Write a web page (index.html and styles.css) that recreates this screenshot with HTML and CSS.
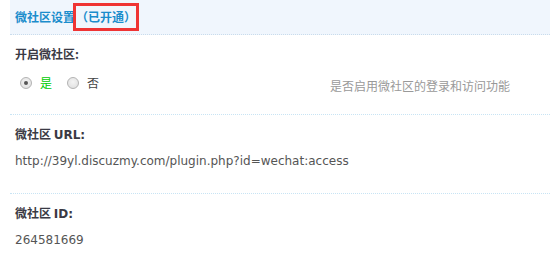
FILE: index.html
```html
<!DOCTYPE html>
<html lang="zh-CN">
<head>
<meta charset="utf-8">
<title>微社区设置</title>
<link rel="stylesheet" href="styles.css">
</head>
<body>
<div class="panel">
  <div class="header">
    <span class="title">微社区设置</span><span class="mark">（已开通）</span>
  </div>
  <div class="section">
    <div class="label">开启微社区:</div>
    <div class="option-row">
      <div class="options">
        <span class="radio checked"></span><span class="opt-yes">是</span>
        <span class="radio"></span><span class="opt-no">否</span>
      </div>
      <div class="tip">是否启用微社区的登录和访问功能</div>
    </div>
  </div>
  <div class="section">
    <div class="label">微社区 <span class="latin">URL:</span></div>
    <div class="value">http://39yl.discuzmy.com/plugin.php?id=wechat:access</div>
  </div>
  <div class="section last">
    <div class="label">微社区 <span class="latin">ID:</span></div>
    <div class="value">264581669</div>
  </div>
</div>
</body>
</html>
```
FILE: styles.css
```css
html, body {
  margin: 0;
  padding: 0;
  background: #fff;
}
body {
  font-family: "Noto Sans CJK SC", "DejaVu Sans", sans-serif;
  font-size: 12px;
  color: #333;
}
.panel {
  margin-left: 10px;
  width: 540px;
}
.header {
  height: 34px;
  line-height: 34px;
  background: #f0f6fd;
  border-bottom: 1px dotted #c9dcec;
  padding-left: 5px;
  display: flex;
  align-items: center;
}
.title {
  color: #1b8dcc;
  font-weight: bold;
}
.mark {
  color: #1b8dcc;
  font-weight: bold;
  border: 3px solid #ef3434;
  height: 22px;
  line-height: 22px;
  margin-left: -2px;
  width: 60px;
}
.section {
  padding: 9px 0 21px 5px;
  border-bottom: 1px dotted #c8e4f4;
}
.section + .section {
  padding-bottom: 22px;
}
.section.last {
  border-bottom: none;
  padding-bottom: 0;
}
.label {
  font-weight: bold;
  line-height: 20px;
  height: 20px;
  color: #3a3a44;
}
.latin {
  font-family: "DejaVu Sans", sans-serif;
  font-size: 12px;
}
.option-row {
  margin-top: 9px;
  display: grid;
  grid-template-columns: 315px 1fr;
  height: 20px;
}
.options {
  display: flex;
  align-items: center;
  height: 20px;
  line-height: 20px;
}
.radio {
  box-sizing: border-box;
  width: 12px;
  height: 12px;
  border-radius: 50%;
  border: 1px solid #b3b3b3;
  background: radial-gradient(circle at 50% 40%, #f4f4f4 0, #dcdcdc 100%);
  margin-left: 5px;
  margin-right: 8px;
  position: relative;
}
.radio.checked::after {
  content: "";
  position: absolute;
  left: 3px;
  top: 3px;
  width: 4px;
  height: 4px;
  border-radius: 50%;
  background: #555;
}
.opt-yes {
  color: #00cc00;
  margin-right: 10px;
}
.opt-no {
  color: #444;
}
.tip {
  color: #999;
  line-height: 20px;
  padding-top: 3px;
}
.value {
  margin-top: 7px;
  line-height: 20px;
  height: 20px;
  font-family: "DejaVu Sans", sans-serif;
  font-size: 12px;
  color: #555;
}
```
